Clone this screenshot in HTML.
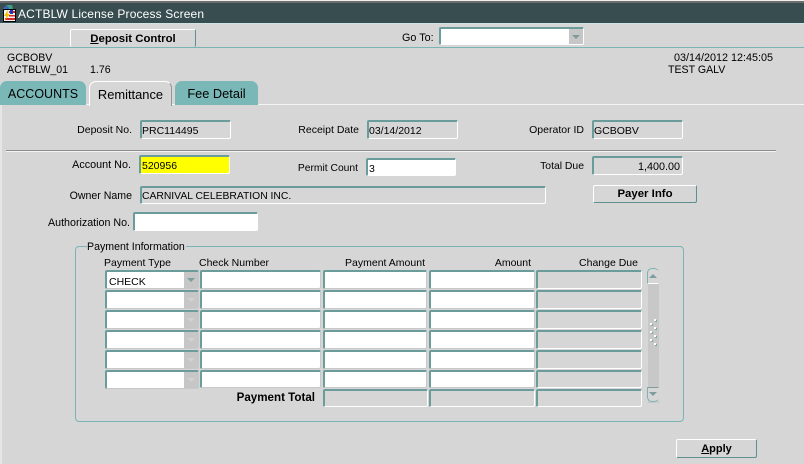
<!DOCTYPE html>
<html><head><meta charset="utf-8"><style>
html,body{margin:0;padding:0}
body{width:804px;height:464px;overflow:hidden;background:#d6d6d6;position:relative;font-family:"Liberation Sans",sans-serif;font-size:10.5px;color:#000}
.a{position:absolute;box-sizing:border-box}
.t{position:absolute;white-space:nowrap;line-height:13px;font-size:10.5px}
.r{text-align:right}
.f{position:absolute;box-sizing:border-box;border-style:solid;border-width:2px 1px 1px 2px;border-color:#6b9c9c #fff #fff #6b9c9c;border-radius:2px;background:#d6d6d6;font-size:10.5px;line-height:14px;padding:2px 0 0 0;white-space:nowrap;overflow:hidden}
.w{background:#fff;border-right-color:#c8c8c8;border-bottom-color:#c8c8c8}
.b{position:absolute;box-sizing:border-box;border:1px solid;border-color:#fff #5f8f8f #5f8f8f #fff;border-radius:2px;background:#d6d6d6;text-align:center;font-weight:bold;font-size:11.4px;line-height:15px}
.dd{position:absolute;right:0;top:0;bottom:0;width:14px;background:#c6c6c6}
.dd:after{content:"";position:absolute;left:3px;top:6px;border-left:4px solid transparent;border-right:4px solid transparent;border-top:4px solid #7d9c9c}
.dd.off:after{border-top-color:#d2d2d2}
.tab{position:absolute;box-sizing:border-box;border-radius:7px 7px 0 0;font-size:13px;line-height:26px;text-align:center;background:#7ab8b8;height:24px}
.dot{position:absolute;width:2px;height:2px;background:#fff;box-shadow:1px 1px 0 #7fa8a8}
</style></head><body>
<div class="a" style="left:0;top:0;width:804px;height:1px;background:#efefef"></div>
<div class="a" style="left:0;top:1px;width:804px;height:2px;background:#6e6e6e"></div>
<div class="a" style="left:0;top:3px;width:804px;height:20px;background:#374d50"></div>
<div class="a" style="left:0;top:23px;width:804px;height:1px;background:#cfe3e3"></div>
<svg class="a" style="left:2px;top:4px" width="15" height="18" viewBox="0 0 15 18">
<path d="M1 5 L5 1 L10 1 L11 5 L3 7Z" fill="#3f9f7f"/>
<path d="M2 3 L6 2 L7 5 L3 6Z" fill="#3d5fc0"/>
<rect x="1" y="5" width="13" height="13" fill="#000"/>
<rect x="2" y="6" width="11" height="11" fill="#f4f4f4"/>
<path d="M7 7h6v2h-6zM7 11h6v1.5h-6zM3 14h10v2h-10z" fill="#d62828"/>
<rect x="8" y="6" width="3" height="4" fill="#2436b8"/>
<path d="M6 6 L2 12 L4.5 12 L3 16.5 L8 10 L5.5 10Z" fill="#f2c200"/>
</svg>
<div class="t" style="left:18px;top:8px;color:#fff;font-size:12px;letter-spacing:.15px">ACTBLW License Process Screen</div>

<div class="b" style="left:70px;top:29px;width:126px;height:18px;border-bottom:0;line-height:18px;border-color:#fff #5f8f8f #5f8f8f #fff"><u>D</u>eposit Control</div>
<div class="a" style="left:0;top:47px;width:804px;height:1px;background:#7ab4b4"></div>
<div class="t" style="left:402px;top:32px;font-size:10.8px">Go To:</div>
<div class="f w" style="left:439px;top:27px;width:145px;height:18px;border-right-color:#fff;border-bottom-color:#fff"><div class="dd"></div></div>

<div class="t" style="left:7px;top:52px;font-size:10.6px">GCBOBV</div>
<div class="t" style="left:7px;top:64px;font-size:10.6px">ACTBLW_01</div>
<div class="t" style="left:90px;top:64px;font-size:10.6px">1.76</div>
<div class="t" style="left:674px;top:52px;font-size:10.8px">03/14/2012 12:45:05</div>
<div class="t" style="left:668px;top:64px;font-size:10.6px">TEST GALV</div>

<div class="a" style="left:0;top:104px;width:804px;height:1px;background:#f4f4f4"></div>
<div class="a" style="left:0;top:105px;width:2px;height:359px;background:#e6e6e6"></div>
<div class="tab" style="left:0;top:81px;width:86px;font-size:12.5px">ACCOUNTS</div>
<div class="tab" style="left:89px;top:81px;width:83px;background:#d6d6d6;border:1px solid #fff;border-bottom:0;border-right-color:#8a9a9a;height:25px;font-size:12.9px">Remittance</div>
<div class="tab" style="left:175px;top:81px;width:83px;font-size:12.8px">Fee Detail</div>

<div class="t r" style="left:40px;top:124px;width:92px">Deposit No.</div>
<div class="f" style="left:140px;top:120px;width:91px;height:19px">PRC114495</div>
<div class="t r" style="left:279px;top:124px;width:80px;font-size:10.5px">Receipt Date</div>
<div class="f" style="left:367px;top:120px;width:91px;height:19px">03/14/2012</div>
<div class="t r" style="left:500px;top:124px;width:84px">Operator ID</div>
<div class="f" style="left:592px;top:120px;width:91px;height:19px">GCBOBV</div>

<div class="a" style="left:6px;top:150px;width:770px;height:1px;background:#8c8c8c"></div>
<div class="a" style="left:6px;top:151px;width:770px;height:1px;background:#f4f4f4"></div>

<div class="t r" style="left:39px;top:159px;width:92px;font-size:10.8px">Account No.</div>
<div class="f" style="left:139px;top:155px;width:91px;height:19px;background:#ff0;padding-left:1px">520956</div>
<div class="t r" style="left:280px;top:162px;width:78px;font-size:10.3px">Permit Count</div>
<div class="f w" style="left:366px;top:158px;width:90px;height:18px;border-right-color:#fff;border-bottom-color:#fff;padding-left:1px">3</div>
<div class="t r" style="left:500px;top:160px;width:84px;font-size:10.4px">Total Due</div>
<div class="f" style="left:592px;top:156px;width:91px;height:19px;text-align:right;padding-right:2px;font-size:10.8px">1,400.00</div>

<div class="t r" style="left:40px;top:190px;width:92px;font-size:10.6px">Owner Name</div>
<div class="f" style="left:140px;top:186px;width:406px;height:18px;font-size:10.35px">CARNIVAL CELEBRATION INC.</div>
<div class="b" style="left:593px;top:185px;width:104px;height:18px;line-height:17px">Payer Info</div>

<div class="t r" style="left:30px;top:217px;width:100px;font-size:10.7px">Authorization No.</div>
<div class="f w" style="left:133px;top:212px;width:125px;height:19px;border-right-color:#fff;border-bottom-color:#fff"></div>

<div class="a" style="left:75px;top:246px;width:609px;height:176px;border:1px solid #7ab4b4;border-radius:4px"></div>
<div class="t" style="left:87px;top:241px;background:#d6d6d6;padding:0 1px 0 0;font-size:10.6px">Payment Information</div>

<div class="t" style="left:104px;top:257px">Payment Type</div>
<div class="t" style="left:199px;top:257px">Check Number</div>
<div class="t r" style="left:324px;top:257px;width:101px">Payment Amount</div>
<div class="t r" style="left:430px;top:257px;width:101px">Amount</div>
<div class="t r" style="left:540px;top:257px;width:98px">Change Due</div>

<!-- rows -->
<div class="f w" style="left:105px;top:270px;width:94px;height:19px;border-right-color:#c8c8c8;padding:3px 0 0 2px">CHECK<div class="dd"></div></div>
<div class="f w" style="left:200px;top:270px;width:121px;height:19px"></div>
<div class="f w" style="left:323px;top:270px;width:104px;height:19px"></div>
<div class="f w" style="left:429px;top:270px;width:106px;height:19px"></div>
<div class="f" style="left:536px;top:270px;width:106px;height:19px"></div>

<div class="f w" style="left:105px;top:290px;width:94px;height:19px"><div class="dd off"></div></div>
<div class="f w" style="left:200px;top:290px;width:121px;height:19px"></div>
<div class="f w" style="left:323px;top:290px;width:104px;height:19px"></div>
<div class="f w" style="left:429px;top:290px;width:106px;height:19px"></div>
<div class="f" style="left:536px;top:290px;width:106px;height:19px"></div>

<div class="f w" style="left:105px;top:310px;width:94px;height:19px"><div class="dd off"></div></div>
<div class="f w" style="left:200px;top:310px;width:121px;height:19px"></div>
<div class="f w" style="left:323px;top:310px;width:104px;height:19px"></div>
<div class="f w" style="left:429px;top:310px;width:106px;height:19px"></div>
<div class="f" style="left:536px;top:310px;width:106px;height:19px"></div>

<div class="f w" style="left:105px;top:330px;width:94px;height:19px"><div class="dd off"></div></div>
<div class="f w" style="left:200px;top:330px;width:121px;height:19px"></div>
<div class="f w" style="left:323px;top:330px;width:104px;height:19px"></div>
<div class="f w" style="left:429px;top:330px;width:106px;height:19px"></div>
<div class="f" style="left:536px;top:330px;width:106px;height:19px"></div>

<div class="f w" style="left:105px;top:350px;width:94px;height:19px"><div class="dd off"></div></div>
<div class="f w" style="left:200px;top:350px;width:121px;height:19px"></div>
<div class="f w" style="left:323px;top:350px;width:104px;height:19px"></div>
<div class="f w" style="left:429px;top:350px;width:106px;height:19px"></div>
<div class="f" style="left:536px;top:350px;width:106px;height:19px"></div>

<div class="f w" style="left:105px;top:370px;width:94px;height:19px"><div class="dd off"></div></div>
<div class="f w" style="left:200px;top:370px;width:121px;height:18px"></div>
<div class="f w" style="left:323px;top:370px;width:104px;height:18px"></div>
<div class="f w" style="left:429px;top:370px;width:106px;height:18px"></div>
<div class="f" style="left:536px;top:370px;width:106px;height:18px"></div>

<div class="t r" style="left:200px;top:391px;width:115px;font-weight:bold;font-size:11.6px">Payment Total</div>
<div class="f" style="left:323px;top:389px;width:105px;height:18px"></div>
<div class="f" style="left:429px;top:389px;width:106px;height:18px"></div>
<div class="f" style="left:536px;top:389px;width:106px;height:18px"></div>

<!-- scrollbar -->
<div class="a" style="left:648px;top:269px;width:11px;height:134px;background:#c8c8c8"></div>
<div class="a" style="left:647px;top:268px;width:12px;height:16px;background:#d6d6d6;border:1px solid #7ab4b4;border-bottom:1px solid #fff;border-right-color:#d6d6d6;border-radius:5px 5px 0 0"></div>
<div class="a" style="left:649px;top:274px;border-left:4px solid transparent;border-right:4px solid transparent;border-bottom:4px solid #7d9c9c"></div>
<div class="a" style="left:647px;top:387px;width:12px;height:15px;background:#d6d6d6;border:1px solid #7ab4b4;border-top:1px solid #7d9c9c;border-right-color:#d6d6d6;border-radius:0 0 5px 5px"></div>
<div class="a" style="left:649px;top:392px;border-left:4px solid transparent;border-right:4px solid transparent;border-top:4px solid #7d9c9c"></div>
<div class="dot" style="left:654px;top:319px"></div><div class="dot" style="left:650px;top:323px"></div>
<div class="dot" style="left:654px;top:327px"></div><div class="dot" style="left:650px;top:331px"></div>
<div class="dot" style="left:654px;top:335px"></div><div class="dot" style="left:650px;top:339px"></div>
<div class="dot" style="left:654px;top:343px"></div>

<div class="b" style="left:676px;top:439px;width:81px;height:19px;line-height:19px;font-size:11px"><u>A</u>pply</div>
</body></html>
